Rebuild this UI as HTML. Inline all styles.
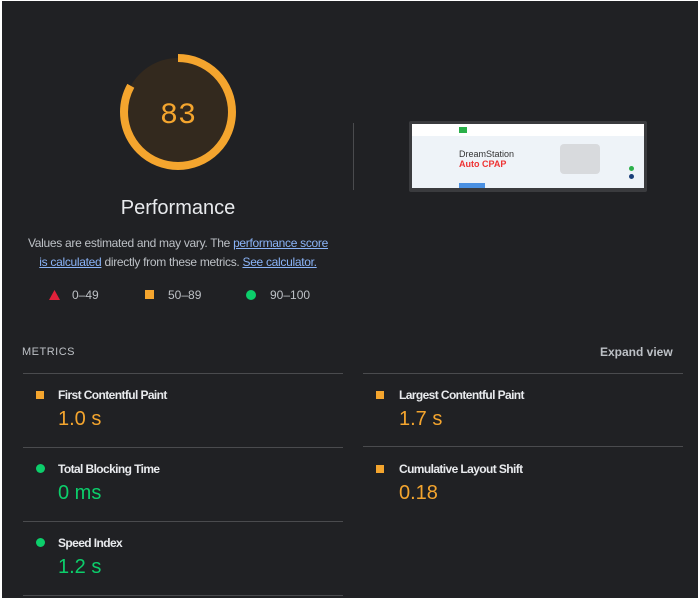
<!DOCTYPE html>
<html><head><style>
html,body{margin:0;padding:0}
body{width:700px;height:602px;background:#fff;position:relative;font-family:"Liberation Sans",Arial,sans-serif;overflow:hidden}
#m{position:absolute;left:2px;top:1px;width:696px;height:597px;background:#202124}
.a{position:absolute}
.t{color:#e8eaed}
.line{position:absolute;height:1px;background:#4a4b4e;width:320px}
.lbl{position:absolute;font-size:12px;font-weight:bold;color:#e8eaed;letter-spacing:-0.6px}
.val{position:absolute;font-size:20px}
.o{color:#f4a52e}.g{color:#0cce6b}
.sq{position:absolute;width:8px;height:8px;background:#f4a52e}
.ci{position:absolute;width:9px;height:9px;border-radius:50%;background:#0cce6b}
a{color:#8ab4f8}
</style></head><body>
<div id="m"></div>
<svg class="a" style="left:118px;top:52px" width="120" height="120" viewBox="0 0 120 120">
<circle cx="60" cy="60" r="54" fill="#33291e"/>
<circle cx="60" cy="60" r="54" fill="none" stroke="#f4a52e" stroke-width="8" stroke-dasharray="281.6 400" transform="rotate(-90 60 60)" stroke-linecap="butt"/>
<text x="60" y="71" text-anchor="middle" font-family="Liberation Mono,monospace" font-size="30" fill="#f4a52e">83</text>
</svg>
<div class="a t" style="left:78px;top:197px;width:200px;text-align:center;font-size:20px">Performance</div>
<div class="a" style="left:8px;top:234px;width:340px;text-align:center;font-size:12px;line-height:19px;color:#bdc1c6;letter-spacing:-0.3px;white-space:nowrap">Values are estimated and may vary. The <a style="text-decoration:underline">performance score</a><br><a style="text-decoration:underline">is calculated</a> directly from these metrics. <a style="text-decoration:underline">See calculator.</a></div>
<svg class="a" style="left:49px;top:290px" width="11" height="10"><polygon points="5.5,0 11,10 0,10" fill="#e0213a"/></svg>
<div class="a" style="left:72px;top:288px;font-size:12px;color:#bdc1c6">0–49</div>
<div class="a" style="left:145px;top:290px;width:9px;height:9px;background:#f4a52e"></div>
<div class="a" style="left:168px;top:288px;font-size:12px;color:#bdc1c6">50–89</div>
<div class="a" style="left:246px;top:290px;width:10px;height:10px;border-radius:50%;background:#0cce6b"></div>
<div class="a" style="left:270px;top:288px;font-size:12px;color:#bdc1c6">90–100</div>
<div class="a" style="left:353px;top:123px;width:1px;height:67px;background:#4a4b4e"></div>
<div class="a" style="left:409px;top:121px;width:238px;height:71px;background:#3a3b3e;border-radius:2px"></div>
<div class="a" style="left:412px;top:124px;width:232px;height:64px;background:#eef3f8;overflow:hidden">
<div class="a" style="left:0;top:0;width:232px;height:12px;background:#fff"></div>
<div class="a" style="left:47px;top:3px;width:8px;height:6px;background:#2bb04a"></div>
<div class="a" style="left:47px;top:25px;font-size:9px;color:#333">DreamStation</div>
<div class="a" style="left:47px;top:35px;font-size:9px;color:#e33;font-weight:bold">Auto CPAP</div>
<div class="a" style="left:47px;top:59px;width:26px;height:5px;background:#4a90e2"></div>
<div class="a" style="left:148px;top:20px;width:40px;height:30px;background:#d8dadd;border-radius:4px"></div>
<div class="a" style="left:217px;top:42px;width:5px;height:5px;border-radius:50%;background:#2bb04a"></div>
<div class="a" style="left:217px;top:50px;width:5px;height:5px;border-radius:50%;background:#1a3f7a"></div>
</div>
<div class="a" style="left:22px;top:346px;font-size:11px;letter-spacing:0.5px;color:#bdc1c6">METRICS</div>
<div class="a" style="left:600px;top:345px;font-size:12px;font-weight:bold;color:#bdc1c6">Expand view</div>
<div class="line" style="left:23px;top:373px"></div><div class="line" style="left:363px;top:373px"></div>
<div class="line" style="left:23px;top:447px"></div><div class="line" style="left:363px;top:446px"></div>
<div class="line" style="left:23px;top:521px"></div>
<div class="line" style="left:23px;top:595px"></div>
<div class="sq" style="left:36px;top:391px"></div><div class="lbl" style="left:58px;top:388px">First Contentful Paint</div><div class="val o" style="left:58px;top:408px">1.0 s</div>
<div class="sq" style="left:376px;top:391px"></div><div class="lbl" style="left:399px;top:388px">Largest Contentful Paint</div><div class="val o" style="left:399px;top:408px">1.7 s</div>
<div class="ci" style="left:36px;top:464px"></div><div class="lbl" style="left:58px;top:462px">Total Blocking Time</div><div class="val g" style="left:58px;top:482px">0 ms</div>
<div class="sq" style="left:376px;top:465px"></div><div class="lbl" style="left:399px;top:462px">Cumulative Layout Shift</div><div class="val o" style="left:399px;top:482px">0.18</div>
<div class="ci" style="left:36px;top:538px"></div><div class="lbl" style="left:58px;top:536px">Speed Index</div><div class="val g" style="left:58px;top:556px">1.2 s</div>
</body></html>
